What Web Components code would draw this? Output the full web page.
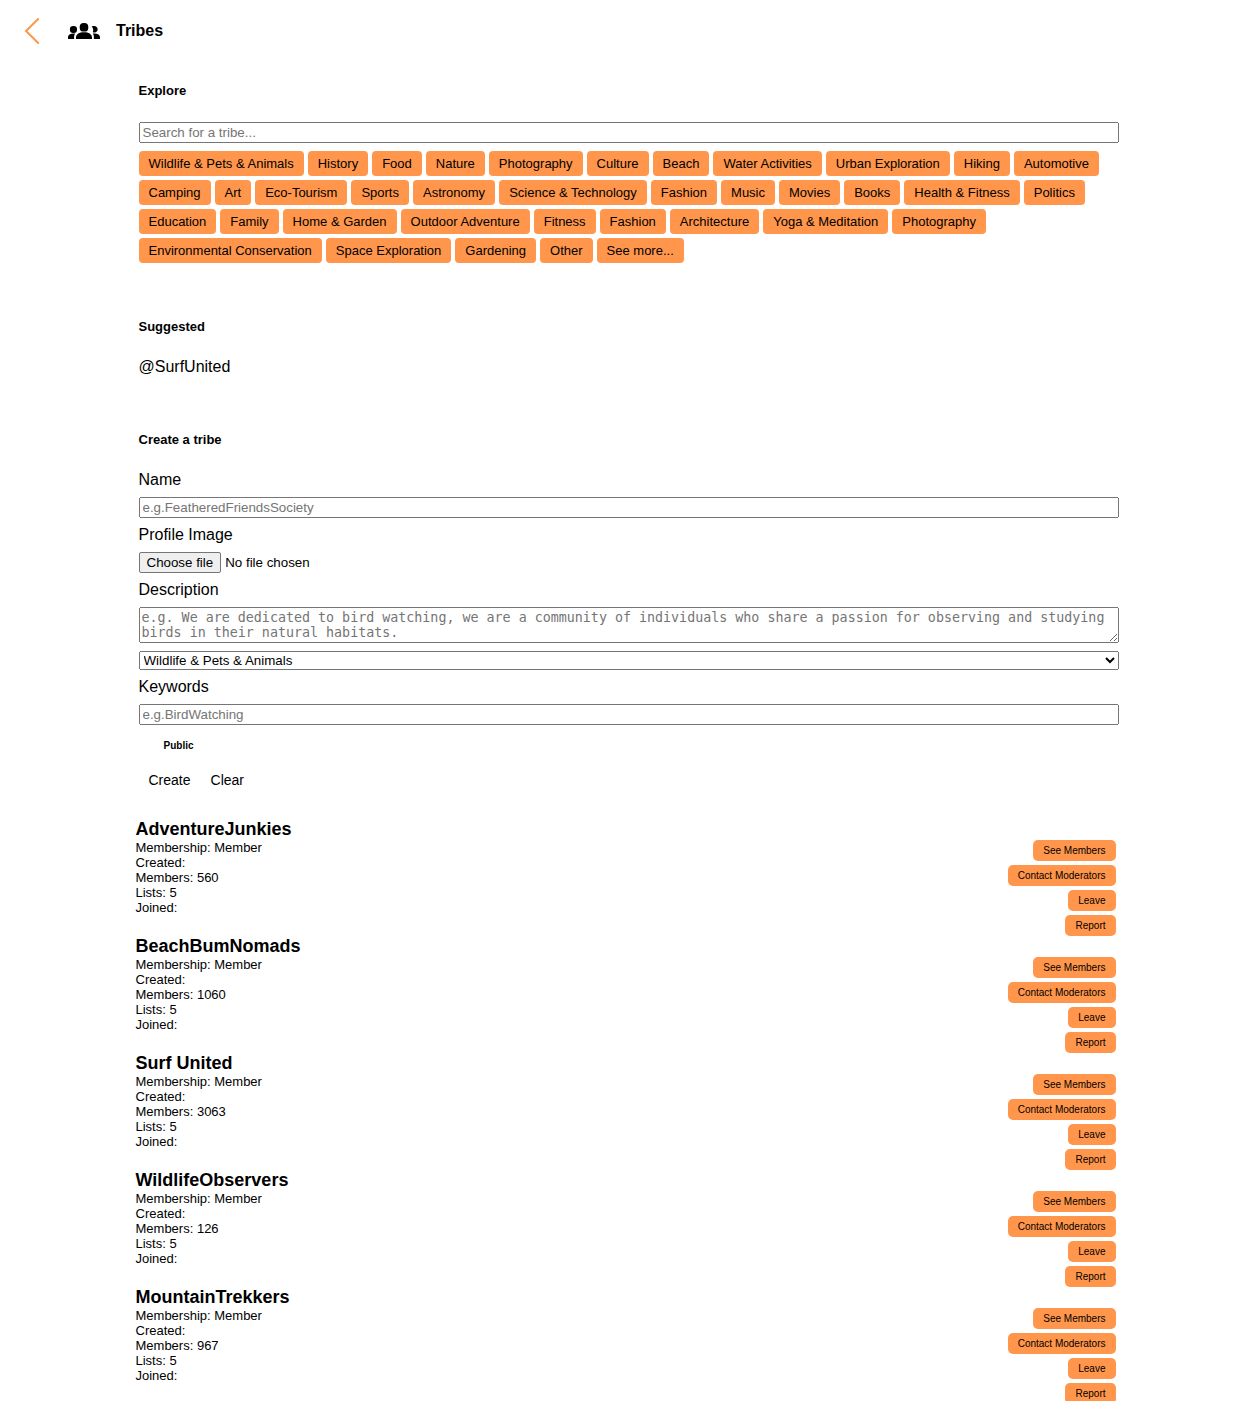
<!DOCTYPE html>
<html lang="en">
<head>
<meta charset="utf-8">
<title>Tribes</title>
<style>
html{overflow:hidden}
body{margin:0;height:1401px;overflow:hidden;background:#fff;color:#000;font:16px/18px "Liberation Sans",Arial,sans-serif;--accent:#ff964b}
</style>
</head>
<body>
<tribes-page></tribes-page>
<script>
const define = (name, html, setup) => customElements.define(name, class extends HTMLElement {
  constructor() {
    super();
    this.attachShadow({ mode: "open" });
  }
  connectedCallback() {
    this.shadowRoot.innerHTML = html;
    if (setup) setup(this, this.shadowRoot);
  }
});

define("tribes-header", `
<style>
:host{display:flex;align-items:center;height:62px;padding-left:24px;font-weight:700}
.back{width:16px;height:28px;margin-right:28px}
.group{width:32px;height:18px;margin-right:16px}
svg{display:block}
</style>
<svg class="back" viewBox="0 0 16 28" fill="none" stroke="#ff964b" stroke-width="2" stroke-linecap="round"><path d="M14.200 2 2 14 14.200 26"/></svg>
<svg class="group" viewBox="0 0 32 18">
<rect x="11.700" y="1" width="8.600" height="8.600" rx="3.900"/><rect x="1.900" y="4" width="7.100" height="7" rx="3.200"/><path d="M23.600 4.400C24.600 4 25.700 4 26.600 4a3.300 3.300 0 1 1-1.800 6.200c.9-2 .5-4.300-1.200-5.800Z"/>
<path d="M8 17v-1.500c0-3.400 3.300-5.300 8-5.300s8 1.900 8 5.300V17ZM0 17v-1.500c0-2.800 2.600-4.100 7.300-3.900C6.400 12.600 6.100 14 6.100 15.500V17ZM32 17v-1.500c0-2.800-2.600-4.100-7.300-3.900.9 1 1.200 2.400 1.200 3.900V17Z"/>
</svg>
<span><slot></slot></span>`);

define("section-title", `<style>:host{display:block;font-size:13px;line-height:15px;font-weight:700}</style><slot></slot>`);

define("tag-chip", `
<style>
:host{display:block;background:var(--accent);border-radius:4px;padding:5px 10px;font-size:13px;line-height:15px;white-space:nowrap}
:host([small]){font-size:10px;line-height:11px;border-radius:5px}
:host([plain]){background:none;font-size:14px;line-height:16px}
</style><slot></slot>`);

define("tag-list", `<style>:host{display:flex;flex-wrap:wrap;gap:4px}</style><slot></slot>`);

define("text-field", `
<style>
:host{display:block}
input{display:block;box-sizing:border-box;width:100%;height:21px;margin:0;font-family:"Liberation Sans",Arial,sans-serif}
</style><input type="text">`, (el, root) => {
  root.querySelector("input").placeholder = el.getAttribute("placeholder");
});

define("file-field", `
<style>
:host{display:flex;align-items:center;gap:4px;height:21px;font-size:13.3333px;line-height:15px}
button{height:21px;margin:0;font:13.3333px "Liberation Sans",Arial,sans-serif;padding:1px 7px;border:1px solid #767676;border-radius:2px;background:#efefef;color:#000}
</style><button type="button">Choose file</button><span>No file chosen</span>`);

define("category-select", `
<style>:host{display:block}select{display:block;width:100%;height:19px;margin:0;font-family:"Liberation Sans",Arial,sans-serif}</style>
<select><option>Wildlife &amp; Pets &amp; Animals</option></select>`);

define("description-field", `
<style>:host{display:block}textarea{display:block;box-sizing:border-box;width:100%;height:36px;margin:0;font-family:"DejaVu Sans Mono",monospace;font-size:13.3333px}</style>
<textarea placeholder="e.g. We are dedicated to bird watching, we are a community of individuals who share a passion for observing and studying birds in their natural habitats."></textarea>`);

define("create-form", `
<style>
:host{display:flex;flex-direction:column;gap:8px}
label{display:block;height:18px;line-height:18px}
.public{font-size:10px;line-height:12px;font-weight:700;padding:7px 0 0 25px}
.actions{display:flex;padding-top:7px}
</style>
<label>Name</label><text-field placeholder="e.g.FeatheredFriendsSociety"></text-field>
<label>Profile Image</label><file-field></file-field>
<label>Description</label><description-field></description-field>
<category-select></category-select>
<label>Keywords</label><text-field placeholder="e.g.BirdWatching"></text-field>
<div class="public">Public</div>
<div class="actions"><tag-chip plain>Create</tag-chip><tag-chip plain>Clear</tag-chip></div>`);

define("tribe-card", `
<style>
:host{display:flex;justify-content:space-between;height:117px;font-size:13px;line-height:15px}
h2{margin:0;font-size:18px;line-height:21px}
.actions{display:flex;flex-direction:column;align-items:flex-end;gap:4px;padding-top:21px}
</style>
<div><h2></h2><div>Membership: Member</div><div>Created:</div><div>Members: <span class="n"></span></div><div>Lists: 5</div><div>Joined:</div></div>
<div class="actions"><tag-chip small>See Members</tag-chip><tag-chip small>Contact Moderators</tag-chip><tag-chip small>Leave</tag-chip><tag-chip small>Report</tag-chip></div>`, (el, root) => {
  root.querySelector("h2").textContent = el.getAttribute("name");
  root.querySelector(".n").textContent = el.getAttribute("members");
});

const tags = ["Wildlife & Pets & Animals","History","Food","Nature","Photography","Culture","Beach","Water Activities","Urban Exploration","Hiking","Automotive","Camping","Art","Eco-Tourism","Sports","Astronomy","Science & Technology","Fashion","Music","Movies","Books","Health & Fitness","Politics","Education","Family","Home & Garden","Outdoor Adventure","Fitness","Fashion","Architecture","Yoga & Meditation","Photography","Environmental Conservation","Space Exploration","Gardening","Other","See more..."];
const tribes = [["AdventureJunkies",560],["BeachBumNomads",1060],["Surf United",3063],["WildlifeObservers",126],["MountainTrekkers",967]];

define("tribes-page", `
<style>
:host{display:block}
main{width:980px;margin-left:138.5px;padding-top:21px}
.search{margin:24px 0 8px}
.suggested{margin-top:56px}
.handle{margin-top:24px}
.create{margin:56px 0 24px}
.list{width:980px;margin:26px 0 0 -3px}
</style>
<tribes-header>Tribes</tribes-header>
<main>
<section-title>Explore</section-title>
<text-field class="search" placeholder="Search for a tribe..."></text-field>
<tag-list>${tags.map(t => `<tag-chip>${t.replace(/&/g, "&amp;")}</tag-chip>`).join("")}</tag-list>
<section-title class="suggested">Suggested</section-title>
<div class="handle">@SurfUnited</div>
<section-title class="create">Create a tribe</section-title>
<create-form></create-form>
<div class="list">${tribes.map(([n, m]) => `<tribe-card name="${n}" members="${m}"></tribe-card>`).join("")}</div>
</main>`);
</script>
</body>
</html>
